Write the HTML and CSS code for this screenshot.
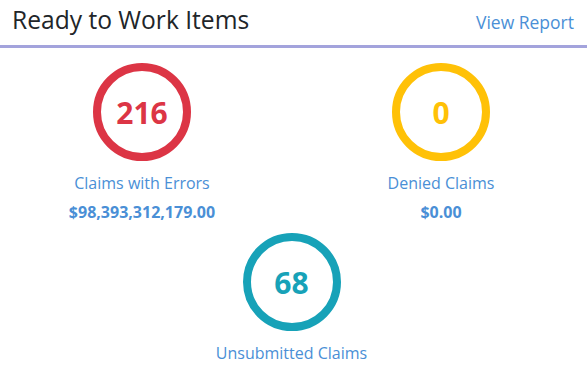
FILE: index.html
```html
<!DOCTYPE html>
<html lang="en">
<head>
    <meta charset="UTF-8">
    <meta name="viewport" content="width=device-width, initial-scale=1.0">
    <title>Ready to Work Items</title>
    <link rel="stylesheet" href="styles.css">
</head>
<body>
    <div class="widget">
        <div class="widget-header">
            <h2>Ready to Work Items</h2>
            <a href="#" class="view-report">View Report</a>
        </div>

        <div class="stats">
            <div class="stat">
                <div class="ring ring-red">216</div>
                <div class="stat-label">Claims with Errors</div>
                <div class="stat-amount">$98,393,312,179.00</div>
            </div>
            <div class="stat">
                <div class="ring ring-yellow">0</div>
                <div class="stat-label">Denied Claims</div>
                <div class="stat-amount">$0.00</div>
            </div>
            <div class="stat stat-wide">
                <div class="ring ring-teal">68</div>
                <div class="stat-label">Unsubmitted Claims</div>
            </div>
        </div>
    </div>
</body>
</html>
```

FILE: styles.css
```css
/* General Styles */
body, html {
    margin: 0;
    padding: 0;
    font-family: 'Open Sans', sans-serif;
    background-color: #ffffff;
    color: #212529;
}

.widget {
    width: 587px;
}

.widget-header {
    display: flex;
    justify-content: space-between;
    align-items: baseline;
    padding: 4px 13px 0 12px;
    height: 41px;
    border-bottom: 3px solid #a3a3dc;
}

.widget-header h2 {
    margin: 0;
    font-size: 24.6px;
    font-weight: 400;
    line-height: 32px;
}

.view-report {
    color: #4a8fd6;
    font-size: 17.5px;
    text-decoration: none;
}

.stats {
    display: grid;
    grid-template-columns: 284px 284px;
    column-gap: 15px;
    padding-top: 15px;
}

.stat {
    display: flex;
    flex-direction: column;
    align-items: center;
}

.stat-wide {
    grid-column: 1 / 3;
    margin-top: 11px;
}

.ring {
    width: 82px;
    height: 82px;
    border: 8px solid;
    border-radius: 50%;
    display: flex;
    justify-content: center;
    align-items: center;
    font-size: 30px;
    font-weight: 700;
}

.ring-red {
    border-color: #dc3545;
    color: #dc3545;
}

.ring-yellow {
    border-color: #ffc107;
    color: #ffc107;
}

.ring-teal {
    border-color: #17a2b8;
    color: #17a2b8;
}

.stat-label {
    margin-top: 11px;
    color: #4a8fd6;
    font-size: 16px;
    line-height: 22px;
}

.stat-amount {
    margin-top: 8px;
    color: #4a8fd6;
    font-size: 16px;
    font-weight: 700;
    line-height: 20px;
}
```
